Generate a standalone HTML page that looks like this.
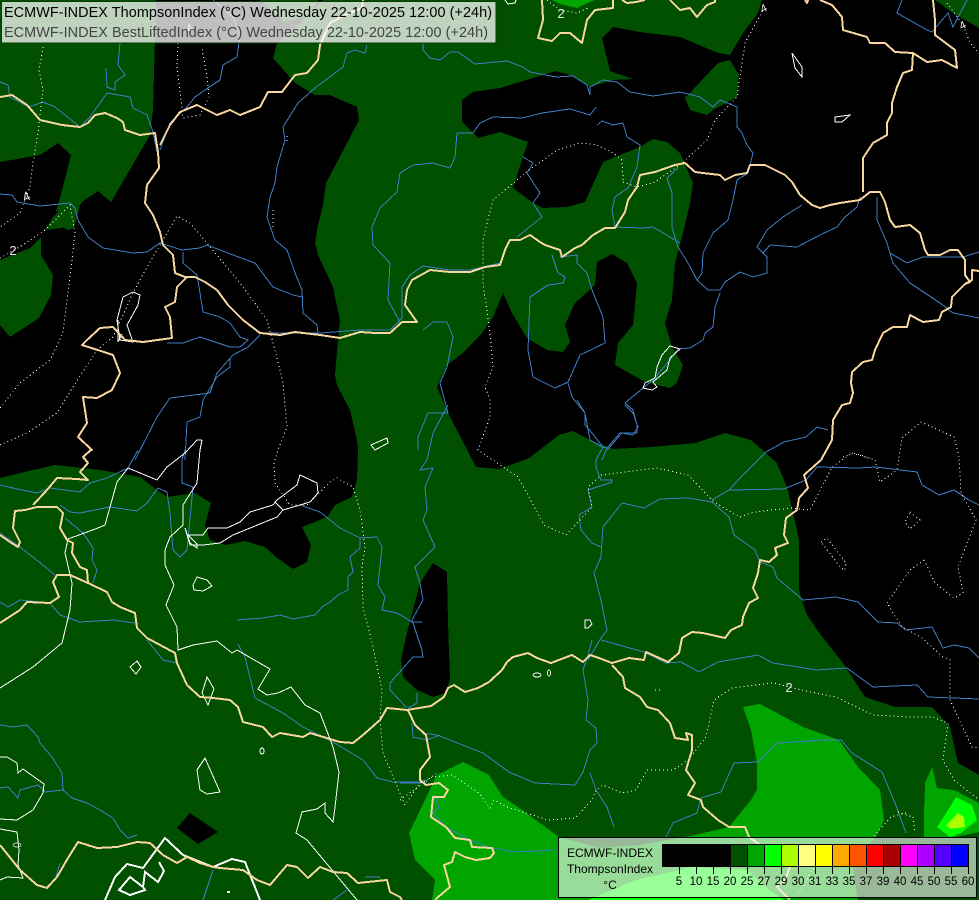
<!DOCTYPE html>
<html><head><meta charset="utf-8"><title>ECMWF-INDEX ThompsonIndex</title>
<style>html,body{margin:0;padding:0;background:#000}svg{display:block}text{font-family:"Liberation Sans",sans-serif}</style></head>
<body>
<svg width="979" height="900" viewBox="0 0 979 900" xmlns="http://www.w3.org/2000/svg">
<rect width="979" height="900" fill="#005000"/>
<g shape-rendering="crispEdges">
<g fill="#000">
<polygon points="156,0 153,110 150,135 111,202 98,191 83,201 80,205 56,212 62,190 71,155 58,143 40,155 0,162 0,478 20,473 55,465 100,470 140,477 157,490 167,497 195,493 211,503 205,525 210,540 225,545 245,541 265,547 277,558 293,569 307,562 311,545 302,527 327,517 335,505 352,497 357,480 358,450 357,440 350,410 337,385 335,375 338,340 340,320 333,287 318,255 315,243 318,225 323,205 326,183 345,147 359,120 357,107 330,95 315,95 295,83 273,58 277,43 300,23 323,0"/>
<polygon points="762,0 935,0 953,13 979,28 979,775 958,763 950,727 932,707 895,707 865,697 843,663 817,630 806,613 799,590 799,540 788,490 777,463 751,440 725,433 695,443 651,447 614,449 592,441 573,431 559,435 529,458 500,469 476,467 448,413 437,387 447,365 463,353 482,333 493,317 503,293 512,313 527,338 547,350 563,352 570,342 565,325 575,303 595,285 597,262 612,254 627,263 637,283 633,325 618,343 615,365 645,382 670,388 677,383 683,365 672,347 665,323 672,300 675,263 683,233 690,203 693,183 680,153 667,142 653,139 640,147 603,162 585,202 567,207 543,208 533,203 513,188 523,157 528,142 500,132 478,138 462,122 462,100 473,92 500,88 556,71 573,76 590,87 613,80 633,79 610,71 602,38 613,27 640,32 680,37 718,53 730,55 743,33 758,13"/>
<polygon points="433,563 447,572 448,623 450,680 445,693 433,697 417,690 403,677 401,660 407,633 420,583"/>
<polygon points="190,813 218,832 198,844 177,828"/>
</g>
<g fill="#005000">
<polygon points="45,230 53,217 71,200 80,205 74,228 68,230 63,227 41,253 62,228"/>
<polygon points="0,260 30,248 41,237 41,255 53,275 51,295 39,318 10,337 0,325"/>
<polygon points="685,98 718,63 730,60 739,75 737,97 713,110 707,115 690,110"/>
<polygon points="260,0 285,22 310,15 318,0"/>
</g>
<g fill="#00a500">
<polygon points="463,762 489,775 503,797 518,807 559,837 600,848 640,845 695,835 729,827 751,800 757,790 757,763 751,730 743,707 760,704 803,727 839,740 858,767 880,790 884,820 876,837 852,863 858,900 432,900 435,880 415,860 409,833 437,775"/>
<polygon points="932,767 937,788 954,790 979,803 979,832 950,838 924,838 924,813 925,783"/>
<polygon points="552,0 560,4 577,8 590,2 595,0"/>
</g>
<polygon fill="#00ff00" points="588,900 636,880 692,867 747,870 769,890 784,900"/>
<polygon fill="#00ff00" points="956,797 972,805 977,820 961,833 950,837 937,827 950,807"/>
<polygon fill="#aaff00" points="958,813 964,817 965,827 950,829 946,825"/>
<!-- rivers -->
<g fill="none" stroke="#3f7dc4" stroke-width="1">
<polyline points="0,82 8,85 10,97 29,107 43,102 55,107 80,127 90,117 100,103 107,93 130,97 133,108 147,115 153,132 157,152"/>
<polyline points="106,68 107,87 115,90 115,82 125,75 118,65 120,43"/>
<polyline points="160,150 170,123 187,107 195,97 208,88 220,80 223,65 237,57 239,43 239,33 233,17 213,0"/>
<polyline points="423,43 423,50 430,58 440,60 450,52 458,52 475,64 507,61 523,67 530,72 556,77 573,76 587,85 590,95 590,87 603,80 617,82 630,92 653,96 680,92 700,97 713,107 720,100 737,107 737,127 742,133 747,145 753,153 748,173 737,180 733,200 728,220 713,233 703,253 702,273 697,280"/>
<polyline points="457,133 473,133 480,123 493,117 522,118 542,113 570,109 590,115 596,107"/>
<polyline points="597,125 602,121 613,125 623,123 627,137 640,145 637,167 628,188 615,197 612,210 615,227"/>
<polyline points="367,45 365,53 355,50 347,53 343,67 315,88 298,103 283,127 285,140 277,167 275,183 270,197 267,217 275,240 287,250 295,273 302,290 303,313 317,325 318,333"/>
<polyline points="0,194 12,195 17,202 40,206 70,203 75,208 78,220 88,237 103,248 133,253 147,252 160,243 182,250 200,248 207,245 233,255 255,263 273,287 293,295 302,297"/>
<polyline points="183,252 183,263 197,275 200,293 203,312 220,317 230,323 240,337 248,340 240,347 230,347 200,337 183,343 167,343"/>
<polyline points="260,335 248,347 233,355 217,373 210,393 170,398 157,417 135,460"/>
<polyline points="230,358 230,367 217,377 203,400 200,417 187,422 185,460"/>
<polyline points="260,333 280,333 320,333 360,330 390,330 402,318 402,287 410,275 423,266 450,270 470,270 500,263"/>
<polyline points="423,330 433,322 447,322 453,337 447,367 440,383 448,413 428,413 418,437 418,450"/>
<polyline points="448,405 433,433 427,460 420,470 433,468 425,487 427,510 423,520 435,547 415,567 420,583 423,600 412,620 422,650 423,657 413,657 390,683 390,690 407,708"/>
<polyline points="372,227 373,245 390,263 388,300 400,322"/>
<polyline points="372,227 380,208 397,192 400,173 413,165 433,163 450,168 455,157 457,133"/>
<polyline points="523,157 533,163 527,173 540,193 533,203 542,217 517,237"/>
<polyline points="678,168 667,178 672,193 672,227 678,247 688,263 697,280 708,290 720,290 725,282 740,272 753,277 767,273 767,257 757,247 767,230 783,217 802,205"/>
<polyline points="763,253 770,245 797,247 820,235 837,227 845,217 857,207 860,197"/>
<polyline points="613,227 643,228 653,227 680,243"/>
<polyline points="552,255 558,273 565,277 563,283 548,285 530,297 528,350 533,377 555,388 568,382 580,355 605,343 603,317 592,290 587,273 577,263 577,255 560,257"/>
<polyline points="568,383 572,397 585,413 590,440 602,447 607,448 602,460"/>
<polyline points="720,293 715,307 713,327 705,333 703,340 690,348 678,349 670,360 653,380 637,393 625,403 633,410 637,425 637,433 620,433 607,448"/>
<polyline points="877,197 877,220 887,243 893,263 910,283 940,303 953,313 979,318"/>
<polyline points="890,253 907,263 923,257 963,257 979,252"/>
<polyline points="902,0 897,13 927,30 932,32 948,13 953,27 967,0"/>
<polyline points="712,500 729,490 784,489 806,480 817,467 858,468 876,467 917,472 922,485 939,495 954,490 969,500 979,505"/>
<polyline points="729,490 740,478 766,452 784,442 806,437 817,427 828,430"/>
<polyline points="622,503 603,527 601,557 594,573 601,600 607,630 601,638 588,660"/>
<polyline points="622,503 644,508 660,499 688,498 712,502 729,517 734,535 755,550 760,562 773,567 777,578 803,600 836,597 858,602 878,622 897,623 906,630 932,627 943,648 954,645 969,648 979,658"/>
<polyline points="577,400 585,413 585,425 592,433 603,447 596,460 596,468 601,480 612,480 612,482 588,490 592,507 579,515 581,530 592,543 601,547"/>
<polyline points="625,405 633,413 638,427 633,435 622,433 607,450"/>
<polyline points="601,640 644,652 666,663 681,662 699,672 718,662 758,655 773,663 817,670 847,668 873,687 917,685 928,697 979,699"/>
<polyline points="592,640 588,655 583,670 588,700 586,720 596,728 597,743 590,750 583,772 575,785 535,783 509,772 483,753 437,735 422,733"/>
<polyline points="590,773 596,790 607,807 614,827"/>
<polyline points="841,740 852,753 882,772 895,803 906,833"/>
<polyline points="701,798 697,813 673,823 666,837"/>
<polyline points="701,798 721,792 734,763 758,762 777,743 825,740 841,740"/>
<polyline points="400,783 422,783"/>
<polyline points="435,795 439,808 433,813 446,827 470,840 492,848 514,852 555,850"/>
<polyline points="0,485 17,489 37,493 50,488 80,492 90,483 107,478 128,468 138,450"/>
<polyline points="60,505 70,512 80,513 110,507 137,511 147,503 158,488 167,492 170,513 173,550 180,557 187,550 193,487 182,483 182,460 185,450"/>
<polyline points="65,518 83,533 93,548 92,560 97,570 93,583"/>
<polyline points="0,533 20,547 43,565 55,575"/>
<polyline points="0,602 8,607 20,600 50,603 60,615 80,622 113,620 135,623"/>
<polyline points="147,640 163,660 177,663"/>
<polyline points="300,505 320,512 340,528 360,538 377,537 382,547 378,585 385,597 382,610 397,613 412,622 422,622"/>
<polyline points="360,538 360,548 350,557 353,572 348,577 348,590 338,595 330,602 322,607 315,615 293,619 280,615 263,618 237,620"/>
<polyline points="238,644 245,657 255,698 283,713 303,727 333,742 363,760 377,778 393,782 427,782"/>
<polyline points="412,723 413,737 427,740 440,735"/>
<polyline points="0,725 13,727 27,725 38,737 40,743 52,757 62,773 63,790 72,798 87,803 100,810 113,818 120,830 128,838 137,835"/>
<polyline points="0,788 8,787 18,798 20,790 38,785 45,792 63,790"/>
<polyline points="213,870 203,900"/>
<polyline points="60,863 55,880"/>
<polyline points="347,890 333,900"/>
<polyline points="365,877 380,877"/>
<polyline points="417,693 417,703 408,708"/>
</g>
<!-- dotted -->
<g fill="none" stroke="#fff" stroke-width="1" stroke-dasharray="1 3">
<polyline points="43,47 39,70 43,90 38,133 33,163 30,187 20,213 0,227"/>
<polyline points="0,258 23,245 45,230 70,205 75,233 70,277 63,333 50,360 20,383 0,408"/>
<polyline points="0,445 27,433 57,413 73,387 97,350 113,337 133,293 147,267 163,240 177,216 190,223 207,243 240,283 267,320 275,350 283,383 287,427 278,450 274,463 275,483 290,505 307,505 330,482 337,478 353,487 360,510 365,547 362,567 363,607 373,647 382,690 380,720 383,753 405,805 420,783 433,777 452,775 479,793 490,808 494,800 507,807 548,820 575,818 592,800 596,790 603,785 622,793 636,790 647,770 673,770 688,760 706,737 714,700 732,688 773,683 806,691 836,697 873,715 910,717 932,717 948,723 943,760 954,780 979,800"/>
<polyline points="400,800 418,787 437,773"/>
<polyline points="924,560 910,570 887,603 902,627 921,637 943,657 950,660 950,700 972,747 979,748"/>
<polyline points="924,560 935,583 954,598 963,593 958,567 976,520 961,493 959,457 954,437 921,422 902,438 897,470 880,482 875,460 852,453 832,467 810,510 791,508 754,512 740,517 714,502 688,475 657,468 601,475 588,487 592,507 566,535 544,525 529,497 518,477 478,450 490,417 490,400 485,387 493,367 490,333 483,283 483,240 493,200 525,173"/>
<polyline points="623,180 622,160 613,153 597,145 580,143 557,150 525,173"/>
<polyline points="623,182 637,187 653,183 680,165 707,140 715,120 737,97 745,43 763,10"/>
<polyline points="843,457 853,453 870,458"/>
<polyline points="547,0 560,10 577,13 590,7"/>
<polyline points="947,3 963,25 970,43 979,53"/>
<polyline points="178,43 177,67 182,107 183,118 200,115 209,97 207,77 202,47"/>
<polyline points="287,136 287,144"/>
<polyline points="273,210 273,230"/>
<polygon points="910,512 920,520 910,529 905,522"/>
<polygon points="821,542 827,538 846,563 845,570 841,568"/>
<polyline points="898,812 913,817 915,833"/>
<polyline points="906,813 891,817 873,837"/>
<polyline points="799,893 814,867 825,850"/>
<polyline points="655,690 662,690"/>
</g>
<!-- white -->
<g fill="none" stroke="#fff" stroke-width="1">
<polyline points="202,440 197,440 185,453 167,467 157,480 128,468 117,482 110,507 105,525 98,528 68,539 65,553 72,583 70,610 62,643 33,667 0,688"/>
<polyline points="202,440 200,450 197,483 183,505 183,525 170,537 165,550 165,565 174,585 166,605 177,627 178,650 193,645 217,641 232,653 237,650 270,669 258,689 267,695 278,693 291,687 305,705 320,713 333,747 339,772 335,807 333,822 325,813 325,803 317,809 302,812 296,833 307,840 357,900"/>
<polygon points="185,528 190,543 197,548 197,544 188,535 203,535 208,528 227,528 240,522 250,512 273,505 277,500 297,485 300,475 317,483 318,493 310,502 283,510 277,517 233,535 220,543 203,545 190,545"/>
<polyline points="283,510 275,502 277,500"/>
<polygon points="371,445 387,438 388,443 375,450"/>
<polygon points="193,585 197,577 207,580 212,586 203,591 194,590"/>
<polygon points="130,667 137,661 141,667 136,674"/>
<polygon points="207,677 214,689 208,705 202,693"/>
<ellipse cx="262" cy="751" rx="2" ry="3"/>
<polygon points="205,758 220,792 207,794 200,790 197,770"/>
<polyline points="0,757 7,757 17,763 18,773 23,769 44,784 43,793 33,810 17,820 0,819"/>
<polyline points="0,829 17,832 19,850 18,865 23,878 7,877 0,880"/>
<ellipse cx="17" cy="845" rx="4" ry="2" stroke="#b8d0b8"/>
<polygon points="133,292 140,295 138,305 127,325 133,342 120,340 117,320 123,297"/>
<polyline points="118,320 118,342 122,334"/>
<polygon points="792,53 802,67 802,77 795,68"/>
<polygon points="835,117 850,115 842,122 835,122"/>
<polygon points="670,346 680,349 670,358 667,370 653,382 657,387 652,390 643,388 645,383 655,378 657,367 662,355"/>
<polygon points="585,620 590,620 592,624 588,628 585,628"/>
<ellipse cx="537" cy="675" rx="4" ry="2"/>
<ellipse cx="549" cy="673" rx="1.5" ry="3"/>
<polyline points="505,0 508,4 515,3 516,0"/>
</g>
<g fill="none" stroke="#fff" stroke-width="2">
<polyline points="105,900 115,877 127,864 143,868 165,838 183,855 213,867 232,859 245,862 260,900"/>
<polygon points="119,890 130,877 143,887 145,890 130,895"/>
<polyline points="143,887 145,872 158,882 164,871 159,862"/>
<rect x="227" y="891" width="3" height="2" fill="#fff" stroke="none"/>
</g>
<!-- borders -->
<g fill="none" stroke="#f7d6a0" stroke-width="2" stroke-linejoin="round">
<polyline points="0,97 12,95 27,105 40,120 62,125 80,127 88,123 95,115 105,113 117,118 123,122 125,130 140,135 155,133 158,152 159,168 147,185 145,203 153,215 160,232 163,245 173,255 175,273 185,277 195,277 205,282 217,290 228,305 243,320 260,333 280,335 295,332 320,335 340,338 360,332 375,333 390,333 402,322 417,322 405,305 407,290 412,280 430,270 450,272 470,272 485,267 500,265 505,250 510,240 520,240 530,235 540,242 545,245 560,250 562,257 575,248 582,245 593,235 605,228 615,228 625,212 628,200 637,187 640,175 655,172 675,165 685,163 695,172 703,173 720,175 725,180 735,175 747,173 750,165 765,165 775,170 785,175 792,182 800,195 812,205 820,208 830,205 840,203 860,200 870,192 880,192 885,202 890,220 895,227 910,225 920,233 925,250 928,255 940,255 950,250 958,250 965,260 965,275 970,282 965,284 952,297 951,307 942,312 939,320 923,322 910,315 907,327 893,327 883,333 875,350 872,360 863,362 852,372 851,383 853,393 850,403 842,405 839,410 833,420 832,440 821,460 804,475 808,488 799,498 797,510 786,518 784,535 788,543 775,548 777,555 769,562 760,560 758,573 753,588 758,598 749,603 743,617 742,625 731,630 725,638 703,633 692,632 682,638 679,653 668,662 657,657 646,652 644,660 629,658 612,663 599,658 590,655 583,662 572,655 551,663 537,658 528,653 513,657 507,662 502,670 489,682 478,688 465,692 454,685 448,688 444,697 431,706 407,710 387,708 380,720 363,735 353,743 340,742 310,733 303,737 280,733 272,737 263,727 243,722 238,707 230,700 213,698 200,697 187,685 177,663 175,653 147,638 137,628 135,613 120,607 112,602 107,592 88,583 70,575 57,575 53,582 59,597 50,603 27,602 20,610 0,623"/>
<polyline points="88,583 87,570 80,567 72,553 73,543 67,540 60,528 63,513 57,507 37,507 25,510 15,511 13,528 20,542 18,547 10,542 0,535"/>
<polyline points="33,505 47,490 57,478 77,479 88,480 80,472 88,463 83,457 91,450 92,450 78,437 87,423 83,397 97,398 112,390 120,373 113,355 107,353 82,345 87,340 100,328 113,327 125,340 143,342 172,338 170,317 165,307 175,302 177,287 187,277"/>
<polyline points="160,145 170,125 180,112 197,105 217,115 230,110 240,115 260,107 268,92 282,92 295,75 307,73 318,60 320,45 330,23 345,15 362,8 363,0"/>
<polyline points="407,710 409,712 415,725 426,735 430,757 420,770 420,780 426,785 439,783 448,790 444,797 433,797 431,817 446,827 455,838 470,840 472,847 492,848 494,853 490,858 476,860 465,857 455,852 452,862 444,865 450,887 437,898 435,900"/>
<polyline points="612,665 623,677 625,688 640,697 647,707 658,710 670,723 675,738 688,740 686,733 692,735 692,750 686,770 695,783 688,795 701,800 703,807 718,820 729,827 745,827 749,837 760,845 775,853 790,867 785,880 777,887 788,898 790,900"/>
<polyline points="0,845 20,870 37,885 47,888 57,877 68,858 78,842 97,848 117,847 137,842 150,843 163,855 177,863 187,857 200,863 213,867 220,868 243,870 257,880 270,885 287,865 297,867 308,878 320,867 333,872 347,873 358,883 387,880 390,892 400,897 402,900"/>
<polyline points="542,0 543,20 538,38 552,41 560,33 570,33 582,43 587,20 595,10 613,8 613,0"/>
<polyline points="622,0 627,3 636,2 645,0"/>
<polyline points="670,0 680,10 690,8 697,17 707,5 715,2 715,0"/>
<polyline points="805,0 807,3 808,0"/>
<polyline points="820,0 832,5 842,17 843,30 867,37 870,43 885,43 895,52 913,53 927,62 942,60 957,68 955,50 935,35 935,20 933,0"/>
<polyline points="913,53 912,70 903,73 897,87 892,103 892,113 887,123 887,135 873,143 863,158 863,192"/>
<polyline points="979,271 972,270 972,280 965,284"/>
</g>
</g>
<!-- contour labels -->
<g fill="#e8e8e8" font-size="13">
<text x="13" y="255" text-anchor="middle">2</text>
<text x="561" y="18" text-anchor="middle">2</text>
<text x="789" y="692" text-anchor="middle">2</text>
<text x="26" y="201" text-anchor="middle" transform="rotate(-25 26 196)">4</text>
<text x="763" y="12" text-anchor="middle" font-size="11" transform="rotate(-25 763 7)">4</text>
<text x="962" y="29" text-anchor="middle" font-size="11" transform="rotate(-25 962 24)">4</text>
<text x="189" y="32" text-anchor="middle" font-size="11" transform="rotate(-25 189 27)">4</text>
</g>
<!-- top legend -->
<rect x="1.5" y="1.5" width="494.5" height="41.5" fill="#fff" fill-opacity=".75" stroke="#0a3a0a" stroke-width="1" shape-rendering="crispEdges"/>
<text x="4" y="17" font-size="14.4" fill="#000" textLength="488">ECMWF-INDEX ThompsonIndex (°C) Wednesday 22-10-2025 12:00 (+24h)</text>
<text x="4" y="37" font-size="14.4" fill="#444" textLength="484">ECMWF-INDEX BestLiftedIndex (°C) Wednesday 22-10-2025 12:00 (+24h)</text>
<!-- bottom legend -->
<g shape-rendering="crispEdges">
<rect x="558.5" y="837.5" width="418" height="60" fill="#fff" fill-opacity=".6" stroke="#000" stroke-width="1"/>
<rect x="662" y="844" width="68" height="23" fill="#000"/>
<rect x="730" y="844" width="17" height="23" fill="#005000"/>
<rect x="747" y="844" width="17" height="23" fill="#00a500"/>
<rect x="764" y="844" width="17" height="23" fill="#00ff00"/>
<rect x="781" y="844" width="17" height="23" fill="#aaff00"/>
<rect x="798" y="844" width="17" height="23" fill="#ffff7f"/>
<rect x="815" y="844" width="17" height="23" fill="#ffff00"/>
<rect x="832" y="844" width="17" height="23" fill="#ffaa00"/>
<rect x="849" y="844" width="17" height="23" fill="#ff5500"/>
<rect x="866" y="844" width="17" height="23" fill="#ff0000"/>
<rect x="883" y="844" width="17" height="23" fill="#aa0000"/>
<rect x="900" y="844" width="17" height="23" fill="#ff00ff"/>
<rect x="917" y="844" width="17" height="23" fill="#aa00ff"/>
<rect x="934" y="844" width="17" height="23" fill="#5500ff"/>
<rect x="951" y="844" width="17" height="23" fill="#0000ff"/>
<rect x="662.5" y="844.5" width="306" height="22" fill="none" stroke="#000"/>
<path fill="none" stroke="#000" d="M679.5 844V874M696.5 844V874M713.5 844V874M730.5 844V874M747.5 844V874M764.5 844V874M781.5 844V874M798.5 844V874M815.5 844V874M832.5 844V874M849.5 844V874M866.5 844V874M883.5 844V874M900.5 844V874M917.5 844V874M934.5 844V874M951.5 844V874M968.5 844V874"/>
</g>
<g font-size="12" fill="#000" text-anchor="middle">
<text x="610" y="857">ECMWF-INDEX</text>
<text x="610" y="873">ThompsonIndex</text>
<text x="610" y="889">°C</text>
</g>
<g font-size="11.5" fill="#000" text-anchor="middle">
<text x="679" y="885">5</text><text x="696" y="885">10</text><text x="713" y="885">15</text><text x="730" y="885">20</text><text x="747" y="885">25</text><text x="764" y="885">27</text><text x="781" y="885">29</text><text x="798" y="885">30</text><text x="815" y="885">31</text><text x="832" y="885">33</text><text x="849" y="885">35</text><text x="866" y="885">37</text><text x="883" y="885">39</text><text x="900" y="885">40</text><text x="917" y="885">45</text><text x="934" y="885">50</text><text x="951" y="885">55</text><text x="968" y="885">60</text>
</g>
</svg>
</body></html>
